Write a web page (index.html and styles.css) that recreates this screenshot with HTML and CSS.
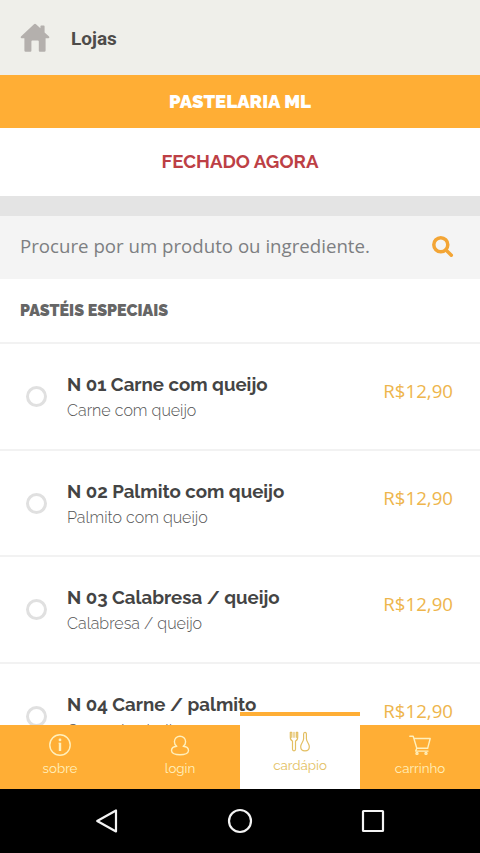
FILE: index.html
```html
<!DOCTYPE html>
<html lang="pt-BR">
<head>
<meta charset="utf-8">
<meta name="viewport" content="width=device-width">
<title>Pastelaria ML</title>
<link rel="stylesheet" href="styles.css">
</head>
<body>
<div class="screen">
  <header class="topbar">
    <svg class="home" viewBox="0 0 30 30"><path d="M14 1.200q1-.8 2 0l4.400 4V3.400q0-.8.8-.8h2.600q.8 0 .8.8v6l4.200 3.900q1.300 1.600-.6 2h-2.600v12.300q0 1.200-1.200 1.200h-4.600q-1 0-1-1V18.500q0-1-1-1h-5.400q-1 0-1 1v9.300q0 1-1 1H5.600q-1.200 0-1.200-1.200V15.300H1.800q-1.900-.4-.6-2z"/></svg>
    <span class="topbar-title">Lojas</span>
  </header>
  <h1 class="store">PASTELARIA ML</h1>
  <div class="status">FECHADO AGORA</div>
  <div class="search">
    <span class="search-hint">Procure por um produto ou ingrediente.</span>
    <svg class="search-icon" viewBox="0 0 22 22"><circle cx="8.800" cy="8.800" r="7"/><path d="M14 14l5.300 5.200"/></svg>
  </div>
  <main class="menu">
    <h2 class="section">PASTÉIS ESPECIAIS</h2>
    <div class="item"><i class="radio"></i><div class="info"><div class="name">N 01 Carne com queijo</div><div class="desc">Carne com queijo</div></div><div class="price">R$12,90</div></div>
    <div class="item"><i class="radio"></i><div class="info"><div class="name">N 02 Palmito com queijo</div><div class="desc">Palmito com queijo</div></div><div class="price">R$12,90</div></div>
    <div class="item"><i class="radio"></i><div class="info"><div class="name">N 03 Calabresa / queijo</div><div class="desc">Calabresa / queijo</div></div><div class="price">R$12,90</div></div>
    <div class="item"><i class="radio"></i><div class="info"><div class="name">N 04 Carne / palmito</div><div class="desc">Carne / palmito</div></div><div class="price">R$12,90</div></div>
  </main>
  <nav class="tabs">
    <div class="tab"><svg class="icon" viewBox="0 0 24 24"><circle cx="12" cy="12" r="10.200"/><circle class="fill" cx="12" cy="6.900" r="1.400"/><path class="stem" d="M12 9.800v8.200"/><path class="serif" d="M11 10.200h1"/></svg><span>sobre</span></div>
    <div class="tab"><svg class="icon" viewBox="0 0 24 24"><path d="M8.800 13.300C7.200 12.300 6.400 10.600 6.400 8.700c0-3.100 2.500-5.500 5.600-5.500s5.600 2.400 5.600 5.500c0 1.900-.8 3.600-2.400 4.600 3.100.3 5.300 2 5.300 4.200 0 2.500-3.600 4.300-8.500 4.300s-8.500-1.800-8.500-4.300c0-2.200 2.200-3.900 5.300-4.200z"/></svg><span>login</span></div>
    <div class="tab active"><svg class="icon" viewBox="0 0 24 24"><path d="M2.300 2.300v4.700q0 3.200 2.200 4v8.300q0 1.500 1.500 1.500t1.500-1.500V11q2.200-.8 2.200-4V2.300H8.300v5M2.300 2.300h1.500v5M6 2.300v5M17 2.300q-1.400 0-1.400 2v4.400c0 3-2.900 4.600-2.900 8q0 4.100 4.300 4.100t4.300-4.100c0-3.400-2.900-5-2.900-8V4.300q0-2-1.400-2z"/></svg><span>cardápio</span></div>
    <div class="tab"><svg class="icon" viewBox="0 0 24 24"><path d="M1.800 3.300h3.400l3.600 11.900h11M6 5.500h16.200l-2.500 9.700M8.800 15.200l-1.100 2.900h12.300"/><circle cx="9" cy="20.400" r="1"/><circle cx="18" cy="20.400" r="1"/></svg><span>carrinho</span></div>
  </nav>
  <footer class="system">
    <svg viewBox="0 0 26 26"><path d="M22 2.500v21L3.200 13z"/></svg>
    <svg viewBox="0 0 26 26"><circle cx="13" cy="13" r="11"/></svg>
    <svg viewBox="0 0 26 26"><rect x="3" y="3" width="20" height="20" rx=".5"/></svg>
  </footer>
</div>
</body>
</html>
```
FILE: styles.css
```css
* { box-sizing: border-box; }
body { margin: 0; background: #fff; font-family: Raleway, Lato, "Open Sans", sans-serif; }
.screen { width: 480px; height: 853px; display: flex; flex-direction: column; overflow: hidden; }
h1, h2 { margin: 0; }
.topbar { flex: none; height: 75px; background: #efefea; display: flex; align-items: center; padding: 1px 20px 0; }
.home { width: 30px; height: 30px; fill: #b4b0ad; }
.topbar-title { margin: 1px 0 0 21px; font: 700 19px/24px Roboto, sans-serif; color: #4e4c4a; }
.store { flex: none; height: 53px; background: #ffae35; color: #fff; text-align: center; font-size: 18.670px; font-weight: 900; line-height: 52px; }
.status { flex: none; height: 88px; border-bottom: 20px solid #e4e4e4; color: #bd4045; text-align: center; font-size: 18.670px; font-weight: 700; line-height: 66px; }
.search { flex: none; height: 63px; background: #f4f4f4; display: flex; align-items: center; justify-content: space-between; padding: 0 26px 2px 20px; }
.search-hint { font: 400 18.670px/26px "Open Sans", sans-serif; color: #7d7f82; margin-top: -2px; }
.search-icon { width: 22px; height: 22px; fill: none; stroke: #f3a535; stroke-width: 3.500; stroke-linecap: round; }
.menu { flex: 1; min-height: 0; overflow: hidden; }
.section { height: 65px; border-bottom: 2px solid #f2f2f2; padding-left: 20px; font-size: 16px; font-weight: 900; line-height: 63px; color: #666; }
.item { height: 106.600px; border-bottom: 2px solid #f2f2f2; display: flex; align-items: flex-start; padding: 0 26px 0 26px; }
.radio { flex: none; width: 21px; height: 21px; border: 3px solid #e0e0e0; border-radius: 50%; margin-top: 42px; }
.info { flex: 1; margin: 28px 0 0 20px; white-space: nowrap; }
.name { font-size: 18.670px; font-weight: 700; line-height: 25px; color: #444; }
.desc { font-size: 16px; font-weight: 300; line-height: 28px; color: #555; }
.price { margin: 34px 1px 0 0; font: 400 18.670px/26px "Open Sans", sans-serif; color: #eeb54c; }
.tabs { flex: none; height: 64px; display: flex; align-items: flex-end; background: #ffae35; }
.tab { width: 120px; height: 64px; display: flex; flex-direction: column; align-items: center; padding-top: 8px; font-size: 13.330px; line-height: 18px; font-weight: 400; color: #fff0bd; background: #ffae35; }
.tab span { margin-top: 2px; }
.icon { width: 24px; height: 24px; fill: none; stroke: currentColor; stroke-width: 1.400; stroke-linejoin: round; stroke-linecap: round; }
.fill { fill: currentColor; stroke: none; }
.stem { stroke-width: 2.400; stroke-linecap: butt; }
.serif { stroke-width: .8; }
.active { height: 77px; background: #fff; border-top: 4px solid #ffae35; padding-top: 14px; color: #e3bf62; z-index: 1; }
.active .icon { stroke-width: 1.200; }
.system { flex: none; height: 64px; background: #000; display: flex; justify-content: space-between; align-items: center; padding: 0 94px; }
.system svg { width: 26px; height: 26px; fill: none; stroke: #f3f3f3; stroke-width: 2.200; stroke-linejoin: round; }
```
